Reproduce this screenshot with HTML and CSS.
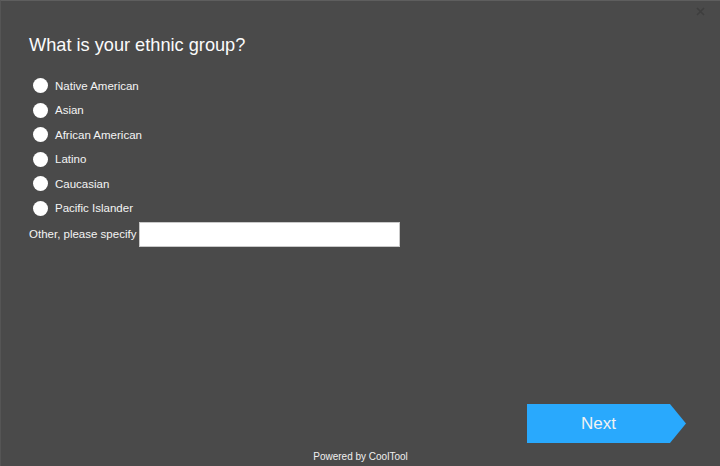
FILE: index.html
```html
<!DOCTYPE html>
<html>
<head>
<meta charset="utf-8">
<link rel="stylesheet" href="styles.css">
</head>
<body>
<div class="frame">
  <span class="close">
    <svg width="9" height="9" viewBox="0 0 9 9"><path d="M1 1L8 8M8 1L1 8" stroke="#3e3e3e" stroke-width="1.6"/></svg>
  </span>
  <main class="survey">
    <h1 class="question">What is your ethnic group?</h1>
    <ul class="options">
      <li class="option"><span class="radio"></span><span class="label">Native American</span></li>
      <li class="option"><span class="radio"></span><span class="label">Asian</span></li>
      <li class="option"><span class="radio"></span><span class="label">African American</span></li>
      <li class="option"><span class="radio"></span><span class="label">Latino</span></li>
      <li class="option"><span class="radio"></span><span class="label">Caucasian</span></li>
      <li class="option"><span class="radio"></span><span class="label">Pacific Islander</span></li>
    </ul>
    <div class="other">
      <span class="other-label">Other, please specify</span>
      <span class="other-input"></span>
    </div>
  </main>
  <div class="actions">
    <div class="next">Next</div>
  </div>
  <footer class="footer">Powered by CoolTool</footer>
</div>
</body>
</html>
```
FILE: styles.css
```css
html, body {
  margin: 0;
  padding: 0;
  background: #4a4a4a;
}
.frame {
  position: relative;
  width: 720px;
  height: 466px;
  box-sizing: border-box;
  border-top: 1px solid #5e5e5e;
  border-left: 1px solid #555;
  background: #4a4a4a;
  font-family: "Liberation Sans", Arial, sans-serif;
  color: #fff;
  display: flex;
  flex-direction: column;
}
.close {
  position: absolute;
  top: 6px;
  right: 15px;
  line-height: 0;
}
.survey {
  padding: 34px 0 0 28px;
  flex: 1;
}
.question {
  margin: 0;
  font-size: 18.2px;
  font-weight: normal;
  line-height: 20px;
  color: #fbfbfb;
}
.options {
  list-style: none;
  margin: 23px 0 0 0;
  padding: 0;
  display: flex;
  flex-direction: column;
  gap: 9.5px;
}
.option {
  display: flex;
  align-items: center;
  height: 15px;
  padding-left: 4px;
}
.radio {
  width: 15px;
  height: 15px;
  border-radius: 50%;
  background: #fff;
  flex: none;
}
.label {
  margin-left: 7px;
  font-size: 11.5px;
  color: #f4f4f4;
}
.other {
  display: flex;
  align-items: center;
  margin-top: 6px;
}
.other-label {
  font-size: 11.5px;
  color: #f4f4f4;
}
.other-input {
  margin-left: 3px;
  width: 259px;
  height: 23px;
  background: #fff;
  border: 1px solid #c9c9c9;
}
.actions {
  display: flex;
  justify-content: flex-end;
  padding-right: 34px;
}
.next {
  width: 159px;
  height: 39px;
  background: #29a9fd;
  clip-path: polygon(0 0, 143px 0, 159px 50%, 143px 100%, 0 100%);
  color: #f2f2f2;
  font-size: 17px;
  line-height: 39px;
  padding-right: 16px;
  box-sizing: border-box;
  text-align: center;
}
.footer {
  height: 23px;
  text-align: center;
  font-size: 10px;
  line-height: 27px;
  color: #f0f0f0;
}
```
